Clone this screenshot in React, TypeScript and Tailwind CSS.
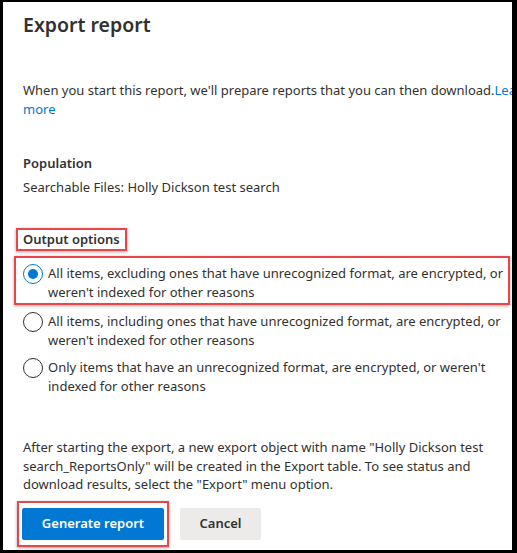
import React from "react";

function Radio({ checked }: { checked?: boolean }) {
  return (
    <span
      className={
        "flex h-[20px] w-[20px] shrink-0 items-center justify-center rounded-full border " +
        (checked ? "border-[#0078d4]" : "border-[#323130]")
      }
    >
      {checked && <span className="h-[10px] w-[10px] rounded-full bg-[#0078d4]" />}
    </span>
  );
}

export default function App() {
  return (
    <div
      className="h-[553px] w-[517px] overflow-hidden border-t-[2px] border-l-[3px] border-r-[5px] border-b-[3px] border-black bg-white text-[13px] text-[#323130]"
      style={{ fontFamily: '"Noto Sans", "Open Sans", sans-serif' }}
    >
      <div className="pl-[20px] pt-[9px]">
        <h1 className="text-[19.5px] font-semibold leading-[28px]">Export report</h1>
        <p className="mt-[42px] whitespace-nowrap leading-[19px]">
          When you start this report, we'll prepare reports that you can then download.
          <span className="text-[#0078d4]">Learn</span>
        </p>
        <p className="leading-[19px] text-[#0078d4]">more</p>
        <div className="mt-[34px] font-semibold leading-[20px]">Population</div>
        <div className="mt-[4px] leading-[20px]">Searchable Files: Holly Dickson test search</div>
        <div className="mt-[31px] ml-[-7px] w-fit border-2 border-[#e8464a] px-[5px] font-semibold leading-[19px] shadow-[0_1px_3px_rgba(0,0,0,0.35)]">
          Output options
        </div>
      </div>
      <div className="mt-[5px] flex flex-col">
        <div className="ml-[11px] mr-[2px] flex gap-[5px] border-2 border-[#e8464a] pt-[6px] pb-[1px] pl-[7px] shadow-[0_1px_3px_rgba(0,0,0,0.35)]">
          <Radio checked />
          <span className="whitespace-nowrap leading-[19px]">
            All items, excluding ones that have unrecognized format, are encrypted, or
            <br />
            weren't indexed for other reasons
          </span>
        </div>
        <div className="ml-[20px] mt-[7px] flex gap-[5px]">
          <Radio />
          <span className="whitespace-nowrap leading-[19px]">
            All items, including ones that have unrecognized format, are encrypted, or
            <br />
            weren't indexed for other reasons
          </span>
        </div>
        <div className="ml-[20px] mt-[8px] flex gap-[5px]">
          <Radio />
          <span className="whitespace-nowrap leading-[19px]">
            Only items that have an unrecognized format, are encrypted, or weren't
            <br />
            indexed for other reasons
          </span>
        </div>
      </div>
      <div className="pl-[20px]">
        <p className="mt-[42px] whitespace-nowrap leading-[18.5px]">
          After starting the export, a new export object with name "Holly Dickson test
          <br />
          search_ReportsOnly" will be created in the Export table. To see status and
          <br />
          download results, select the "Export" menu option.
        </p>
        <div className="mt-[7px] flex items-center gap-[11px]">
          <div className="ml-[-6px] border-2 border-[#e8464a] px-[3px] py-[5px] shadow-[0_1px_3px_rgba(0,0,0,0.35)]">
            <button className="flex h-[32px] w-[142px] items-center justify-center rounded-[2px] bg-[#0078d4] font-semibold text-white">
              Generate report
            </button>
          </div>
          <button className="flex h-[32px] w-[81px] items-center justify-center rounded-[2px] bg-[#edebe9] font-semibold text-[#323130]">
            Cancel
          </button>
        </div>
      </div>
    </div>
  );
}
